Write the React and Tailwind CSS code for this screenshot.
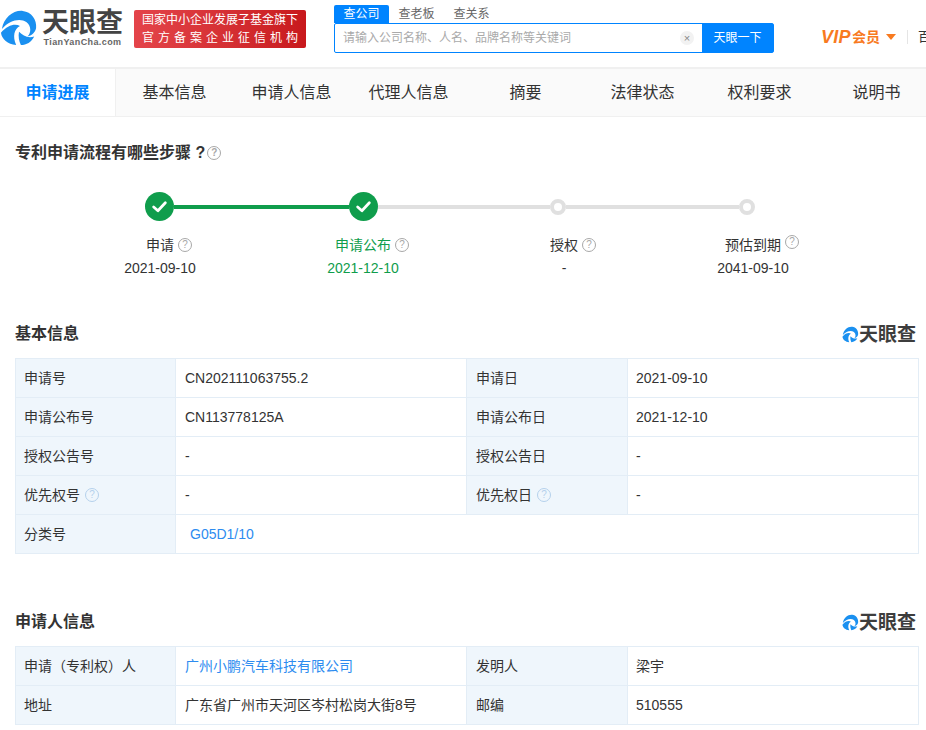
const font = { fontFamily: '"Liberation Sans","Noto Sans CJK SC",sans-serif' };

function LogoMark({ className }) {
  return (
    <svg viewBox="0 0 40 40" className={className} fill="#1a90f0">
      <path d="M2 21C4 9 14 1 24 2C33 3 39 11 38 20C37 25 33 28 29 29C33 25 33 18 28 14C21 9 10 12 2 21Z" />
      <path d="M1 25C8 17 16 15 21 18C15 21 13 29 17 38C8 37 2 32 1 25Z" />
      <path d="M20 24C24 28 29 31 36 29C33 35 28 38 22 38C20 34 19 29 20 24Z" />
    </svg>
  );
}

function Help({ className = "text-[#a8a8a8]" }) {
  return (
    <span className={`inline-flex w-[14px] h-[14px] rounded-full border border-current items-center justify-center text-[10px] leading-none shrink-0 ${className}`}>?</span>
  );
}

function Check() {
  return (
    <span className="w-[29px] h-[29px] rounded-full bg-[#0f9d4c] flex items-center justify-center shrink-0">
      <svg viewBox="0 0 16 16" className="w-[17px] h-[17px]" fill="none" stroke="#fff" strokeWidth="2.6" strokeLinecap="round" strokeLinejoin="round">
        <path d="M2.5 8.5L6.5 12L13.5 4.5" />
      </svg>
    </span>
  );
}

function Dot() {
  return <span className="w-[16px] h-[16px] rounded-full border-[4px] border-[#e0e0e0] bg-white shrink-0" />;
}

function Brand() {
  return (
    <span className="flex items-center text-[#3d3d3d] text-[19px] font-bold leading-none">
      <LogoMark className="w-[17px] h-[17px]" />
      天眼查
    </span>
  );
}

function Step({ label, date, green, raised }) {
  return (
    <div className={`w-[120px] shrink-0 flex flex-col items-center ${green ? "text-[#0f9d4c]" : "text-[#333]"}`}>
      <div className="relative h-[20px] leading-[20px] text-[14px]">
        {label}
        <span className={`absolute flex left-full ml-[4px] ${raised ? "top-0" : "top-[3px]"}`}><Help /></span>
      </div>
      <div className="text-[14px] leading-[20px] mt-[3px]">{date}</div>
    </div>
  );
}

function Th({ children, help, right }) {
  return (
    <td className={`h-[39px] bg-[#eff6fc] border border-[#e3edf6] text-[14px] text-[#333] ${right ? "pl-[9px]" : "pl-[8px]"}`}>
      <span className="flex items-center gap-[5px]">{children}{help && <Help className="text-[#b5d1ec]" />}</span>
    </td>
  );
}

function Td({ children, right, ...rest }) {
  return <td {...rest} className={`h-[39px] pr-[9px] border border-[#e3edf6] text-[14px] text-[#333] ${right ? "pl-[8px]" : "pl-[9px]"}`}>{children}</td>;
}

function SectionHead({ title }) {
  return (
    <div className="flex items-center justify-between pr-[3px] h-[24px] mb-[12px]">
      <h2 className="text-[16px] font-bold text-[#333]">{title}</h2>
      <Brand />
    </div>
  );
}

function Cols() {
  return (
    <colgroup>
      <col className="w-[160px]" /><col className="w-[291px]" /><col className="w-[161px]" /><col className="w-[291px]" />
    </colgroup>
  );
}

const tabs = ["基本信息", "申请人信息", "代理人信息", "摘要", "法律状态", "权利要求", "说明书"];

export default function App() {
  return (
    <div style={font} className="w-[926px] h-[730px] overflow-hidden bg-white">
      <header className="h-[67px] flex items-start overflow-hidden">
        <div className="flex items-center w-[134px] shrink-0 pt-[9px]">
          <LogoMark className="w-[38px] h-[38px] shrink-0" />
          <div className="ml-[4px] flex flex-col items-center">
            <span className="text-[27px] leading-[28px] text-[#444] font-bold">天眼查</span>
            <span className="text-[9px] leading-[10px] font-bold text-[#666] tracking-[0.4px] whitespace-nowrap">TianYanCha.com</span>
          </div>
        </div>
        <div className="mt-[10px] w-[172px] shrink-0 h-[38px] rounded-[2px] bg-gradient-to-r from-[#e4444a] to-[#c8181c] text-white text-[12px] leading-[18px] text-center flex flex-col justify-center">
          <span className="whitespace-nowrap">国家中小企业发展子基金旗下</span>
          <span className="whitespace-nowrap tracking-[4px] pl-[4px]">官方备案企业征信机构</span>
        </div>
        <div className="ml-[28px] mt-[5px] w-[440px] shrink-0">
          <div className="flex h-[18px] text-[12px] leading-[18px] text-[#666]">
            <span className="w-[55px] text-center bg-[#0084ff] text-white rounded-t-[2px]">查公司</span>
            <span className="w-[55px] text-center">查老板</span>
            <span className="w-[55px] text-center">查关系</span>
          </div>
          <div className="flex h-[30px] border border-[#0084ff] rounded-[2px]">
            <div className="w-[367px] flex items-center justify-between pl-[8px] pr-[8px] text-[12px] text-[#aaa]">
              请输入公司名称、人名、品牌名称等关键词
              <span className="w-[14px] h-[14px] rounded-full bg-[#f2f2f2] text-[#888] text-[11px] leading-[14px] text-center">×</span>
            </div>
            <div className="flex-1 bg-[#0084ff] text-white text-[12px] flex items-center justify-center">天眼一下</div>
          </div>
        </div>
        <div className="ml-[47px] mt-[28px] flex items-center h-[18px] shrink-0 whitespace-nowrap">
          <span className="text-[#f87a1f] font-bold italic text-[18px] leading-none tracking-[0.3px]">VIP</span>
          <span className="text-[#f87a1f] font-bold text-[14px] leading-none ml-[1px]">会员</span>
          <span className="ml-[6px] w-0 h-0 border-x-[5px] border-x-transparent border-t-[6px] border-t-[#f87a1f]" />
          <span className="ml-[11px] w-px h-[14px] bg-[#e5e5e5]" />
          <span className="ml-[10px] text-[13px] text-[#333]">百</span>
        </div>
      </header>

      <nav className="h-[50px] border-t-[2px] border-[#f0f0f0] border-b border-b-[#f0f0f0] bg-[#fafafa] flex overflow-hidden">
        <div className="w-[116px] shrink-0 bg-white border-r border-[#f0f0f0] flex items-center justify-center text-[16px] font-bold text-[#0084ff]">申请进展</div>
        {tabs.map((t) => (
          <div key={t} className="w-[117px] shrink-0 flex items-center justify-center text-[16px] text-[#333]">{t}</div>
        ))}
      </nav>

      <main className="pl-[15px] pr-[7px]">
        <h1 className="mt-[26px] h-[20px] flex items-center gap-[2px] text-[16px] font-bold text-[#333] leading-none">
          专利申请流程有哪些步骤 ?
          <Help />
        </h1>

        <div className="mt-[29px] ml-[85px] w-[720px]">
          <div className="flex items-center pl-[45px]">
            <Check />
            <span className="w-[175px] h-[4px] bg-[#0f9d4c]" />
            <Check />
            <span className="w-[172px] h-[4px] bg-[#e0e0e0]" />
            <Dot />
            <span className="w-[173px] h-[4px] bg-[#e0e0e0]" />
            <Dot />
          </div>
          <div className="flex mt-[14px]">
            <Step label="申请" date="2021-09-10" />
            <div className="w-[83px] shrink-0" />
            <Step label="申请公布" date="2021-12-10" green />
            <div className="w-[81px] shrink-0" />
            <Step label="授权" date="-" />
            <div className="w-[69px] shrink-0" />
            <Step label="预估到期" date="2041-09-10" raised />
          </div>
        </div>

        <section className="mt-[44px]">
          <SectionHead title="基本信息" />
          <table className="w-[903px] border-collapse table-fixed">
            <Cols />
            <tbody>
              <tr><Th>申请号</Th><Td>CN202111063755.2</Td><Th right>申请日</Th><Td right>2021-09-10</Td></tr>
              <tr><Th>申请公布号</Th><Td>CN113778125A</Td><Th right>申请公布日</Th><Td right>2021-12-10</Td></tr>
              <tr><Th>授权公告号</Th><Td>-</Td><Th right>授权公告日</Th><Td right>-</Td></tr>
              <tr><Th help>优先权号</Th><Td>-</Td><Th help right>优先权日</Th><Td right>-</Td></tr>
              <tr><Th>分类号</Th><Td colSpan={3}><span className="ml-[5px] text-[#2d8cf0]">G05D1/10</span></Td></tr>
            </tbody>
          </table>
        </section>

        <section className="mt-[56px]">
          <SectionHead title="申请人信息" />
          <table className="w-[903px] border-collapse table-fixed">
            <Cols />
            <tbody>
              <tr><Th>申请（专利权）人</Th><Td><span className="text-[#2d8cf0]">广州小鹏汽车科技有限公司</span></Td><Th right>发明人</Th><Td right>梁宇</Td></tr>
              <tr><Th>地址</Th><Td>广东省广州市天河区岑村松岗大街8号</Td><Th right>邮编</Th><Td right>510555</Td></tr>
            </tbody>
          </table>
        </section>
      </main>
    </div>
  );
}
